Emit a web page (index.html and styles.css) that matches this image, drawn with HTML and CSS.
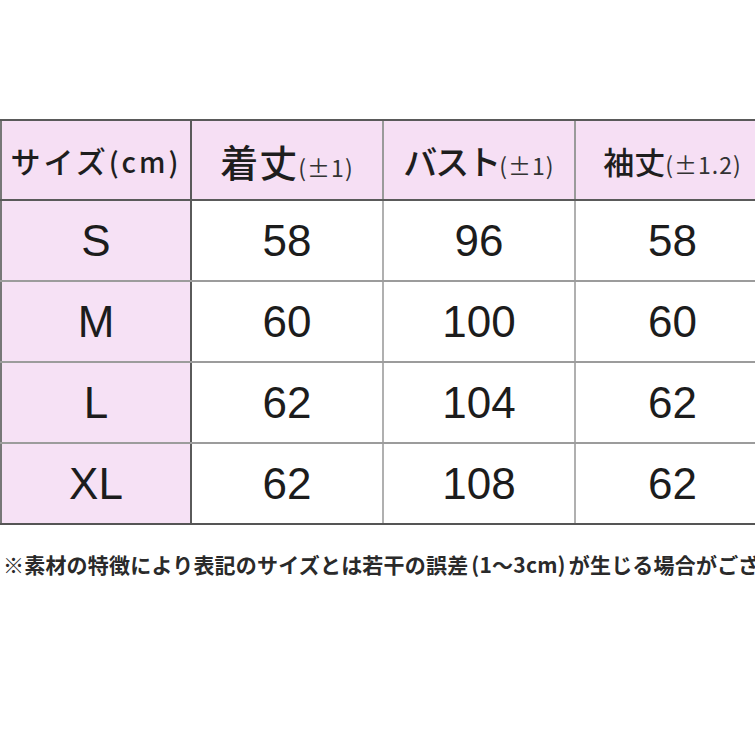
FILE: index.html
```html
<!DOCTYPE html>
<html lang="ja">
<head>
<meta charset="utf-8">
<link rel="stylesheet" href="styles.css">
</head>
<body>
<div class="page">
  <table class="size-table">
    <colgroup>
      <col class="c1"><col class="c2"><col class="c3"><col class="c4">
    </colgroup>
    <thead>
      <tr>
        <th class="label"><span class="kana">サイズ</span><span class="unit">(cm)</span></th>
        <th><span class="big">着丈</span><span class="tol">(±1)</span></th>
        <th><span class="mid">バスト</span><span class="tol">(±1)</span></th>
        <th><span class="sm">袖丈</span><span class="tol">(±1.2)</span></th>
      </tr>
    </thead>
    <tbody>
      <tr><th class="size">S</th><td>58</td><td>96</td><td>58</td></tr>
      <tr><th class="size">M</th><td>60</td><td>100</td><td>60</td></tr>
      <tr><th class="size">L</th><td>62</td><td>104</td><td>62</td></tr>
      <tr><th class="size">XL</th><td>62</td><td>108</td><td>62</td></tr>
    </tbody>
  </table>
  <p class="note">※素材の特徴により表記のサイズとは若干の誤差<span class="paren">(1～3cm)</span>が生じる場合がございます。</p>
</div>
</body>
</html>
```

FILE: styles.css
```css
html, body {
  margin: 0;
  padding: 0;
  background: #ffffff;
}
.page {
  width: 755px;
  height: 755px;
  overflow: hidden;
  padding-top: 119px;
  box-sizing: border-box;
}
.size-table {
  border-collapse: collapse;
  table-layout: fixed;
  width: 768px;
  font-family: "Liberation Sans", Arial, sans-serif;
  color: #222222;
}
.c1 { width: 190px; }
.c2 { width: 192px; }
.c3 { width: 192px; }
.c4 { width: 194px; }

.size-table thead th {
  height: 78px;
  background: #f6dff4;
  border-top: 2px solid #5a5a5a;
  border-bottom: 2px solid #5a5a5a;
  border-left: 2px solid #9a9a9a;
  padding: 0;
  font-weight: normal;
  text-align: center;
  vertical-align: middle;
  white-space: nowrap;
  font-family: "Noto Sans CJK JP", "Liberation Sans", sans-serif;
  color: #1e1e1e;
}
.size-table thead th.label {
  border-left: 2px solid #777777;
  border-right: 2px solid #5a5a5a;
}
.kana {
  font-size: 30px;
  font-weight: 500;
  letter-spacing: 3px;
}
.unit {
  font-size: 28px;
  font-weight: 500;
  letter-spacing: 3px;
}
.big {
  font-size: 38px;
  font-weight: 500;
  letter-spacing: 1px;
}
.mid {
  font-size: 34px;
  font-weight: 500;
  letter-spacing: -2px;
}
.sm {
  font-size: 31px;
  font-weight: 500;
}
.tol {
  font-size: 23px;
  color: #333333;
  letter-spacing: 1px;
}

.size-table tbody th,
.size-table tbody td {
  height: 79px;
  padding: 0;
  text-align: center;
  vertical-align: middle;
  font-size: 44px;
  font-weight: normal;
  border-top: 2px solid #9c9c9c;
  border-bottom: 2px solid #9c9c9c;
  border-left: 2px solid #b0b0b0;
  background: #ffffff;
  color: #1c1c1c;
}
.size-table tbody th.size {
  background: #f6e1f5;
  border-left: 2px solid #777777;
  border-right: 2px solid #5a5a5a;
}
.size-table tbody tr:last-child th,
.size-table tbody tr:last-child td {
  border-bottom: 2px solid #555555;
}

.note {
  margin: 24px 0 0 3px;
  white-space: nowrap;
  font-family: "Noto Sans CJK JP", sans-serif;
  font-size: 21px;
  font-weight: bold;
  letter-spacing: 0.2px;
  color: #2a2a2a;
}
.paren {
  padding: 0 3px;
}
```
